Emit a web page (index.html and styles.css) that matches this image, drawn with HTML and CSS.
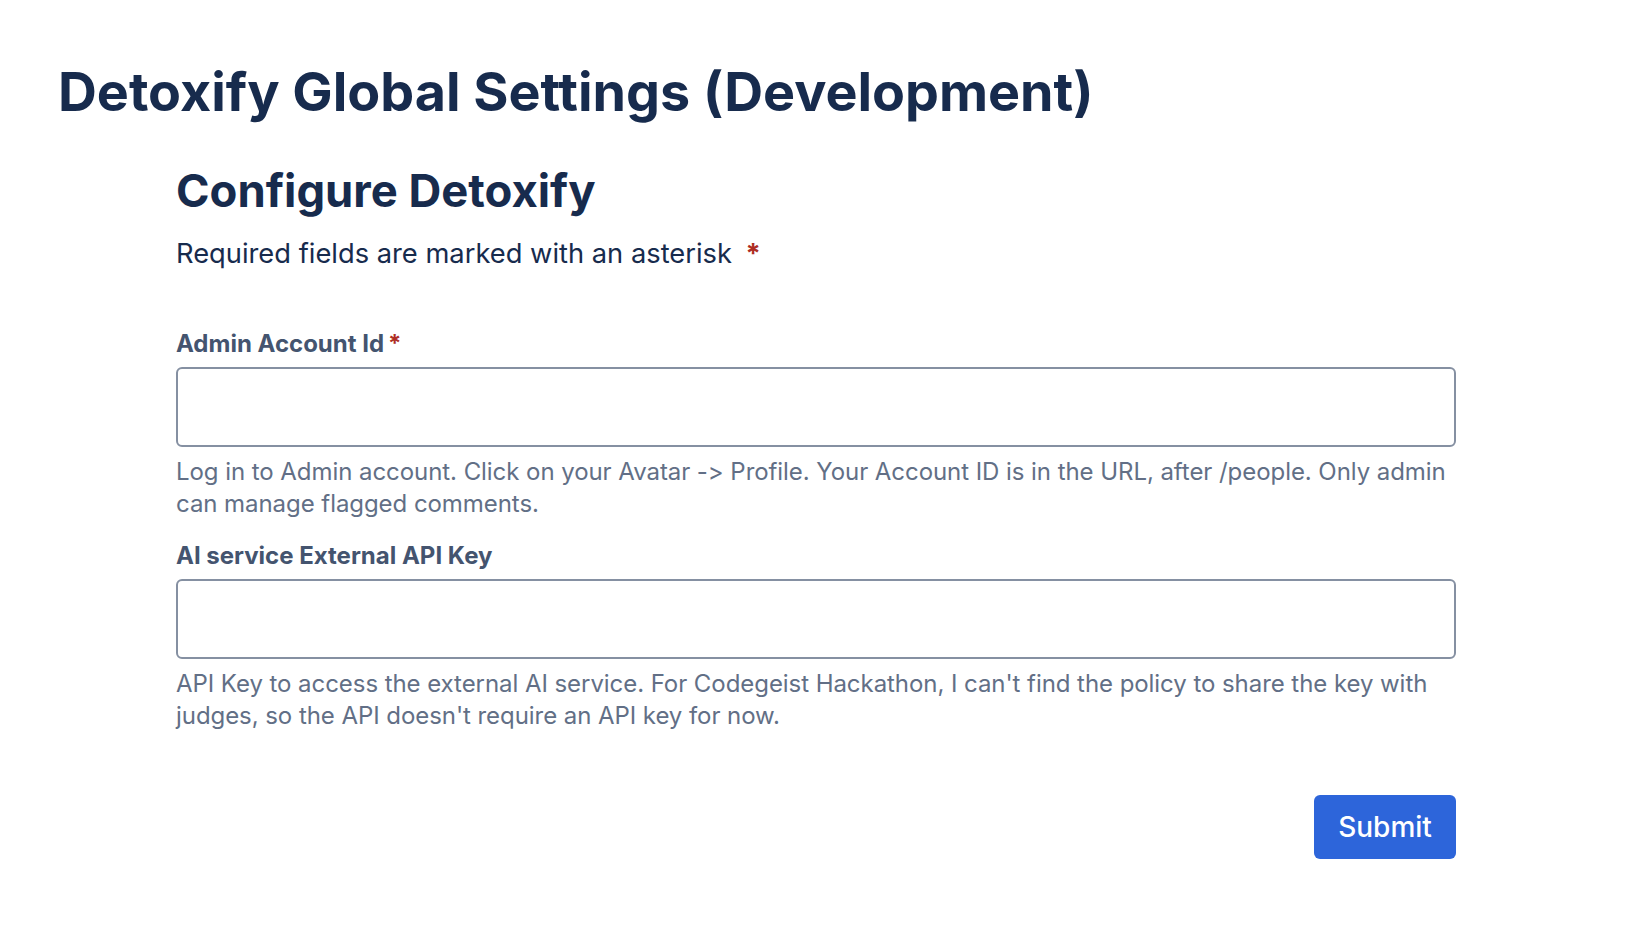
FILE: index.html
```html
<!DOCTYPE html>
<html lang="en">
<head>
<meta charset="utf-8">
<title>Detoxify Global Settings (Development)</title>
<link rel="stylesheet" href="styles.css">
</head>
<body>
<div class="page">
  <h1 class="page-title">Detoxify Global Settings (Development)</h1>
  <form class="form">
    <h2 class="form-title">Configure Detoxify</h2>
    <p class="form-desc">Required fields are marked with an asterisk <span class="req req-gap">*</span></p>

    <div class="field field-first">
      <label class="label" for="admin">Admin Account Id<span class="req">*</span></label>
      <input class="input" id="admin" type="text">
      <div class="helper">Log in to Admin account. Click on your Avatar -&gt; Profile. Your Account ID is in the URL, after /people. Only admin can manage flagged comments.</div>
    </div>

    <div class="field">
      <label class="label" for="apikey">AI service External API Key</label>
      <input class="input" id="apikey" type="text">
      <div class="helper">API Key to access the external AI service. For Codegeist Hackathon, I can't find the policy to share the key with judges, so the API doesn't require an API key for now.</div>
    </div>

    <div class="footer">
      <button class="btn" type="button">Submit</button>
    </div>
  </form>
</div>
</body>
</html>
```

FILE: styles.css
```css
html, body {
  margin: 0;
  padding: 0;
  background: #ffffff;
}
body {
  font-family: Inter, "Noto Sans", "Liberation Sans", sans-serif;
  color: #172B4D;
  font-feature-settings: "calt" 0;
}
.page {
  padding: 60px 0 0 58px;
}
.page-title {
  margin: 0;
  font-size: 53.8px;
  line-height: 64px;
  font-weight: 700;
  color: #172B4D;
}
.form {
  margin: 41px 0 0 118px;
  width: 1280px;
}
.form-title {
  margin: 0;
  font-size: 45.4px;
  line-height: 52px;
  font-weight: 700;
  color: #172B4D;
}
.form-desc {
  margin: 17px 0 0;
  font-size: 27.3px;
  line-height: 40px;
  color: #172B4D;
}
.req {
  color: #AE2E24;
  font-weight: 700;
  margin-left: 4px;
}
.req-gap {
  margin-left: 6px;
}
.field {
  display: flex;
  flex-direction: column;
  margin-top: 20px;
}
.field-first {
  margin-top: 54px;
}
.label {
  font-size: 24px;
  line-height: 32px;
  font-weight: 700;
  color: #44546F;
  margin-bottom: 7px;
}
.input {
  box-sizing: border-box;
  height: 80px;
  width: 100%;
  border: 2px solid #8590A2;
  border-radius: 6px;
  background: #ffffff;
  font: inherit;
  margin: 0;
}
.helper {
  margin-top: 9px;
  font-size: 24px;
  line-height: 32px;
  color: #626F86;
  letter-spacing: -0.06px;
}
.footer {
  display: flex;
  justify-content: flex-end;
  margin-top: 63px;
}
.btn {
  width: 142px;
  height: 64px;
  border: none;
  border-radius: 6px;
  background: #2D65DA;
  color: #ffffff;
  font-family: inherit;
  font-size: 28px;
  font-weight: 500;
  cursor: pointer;
}
```
